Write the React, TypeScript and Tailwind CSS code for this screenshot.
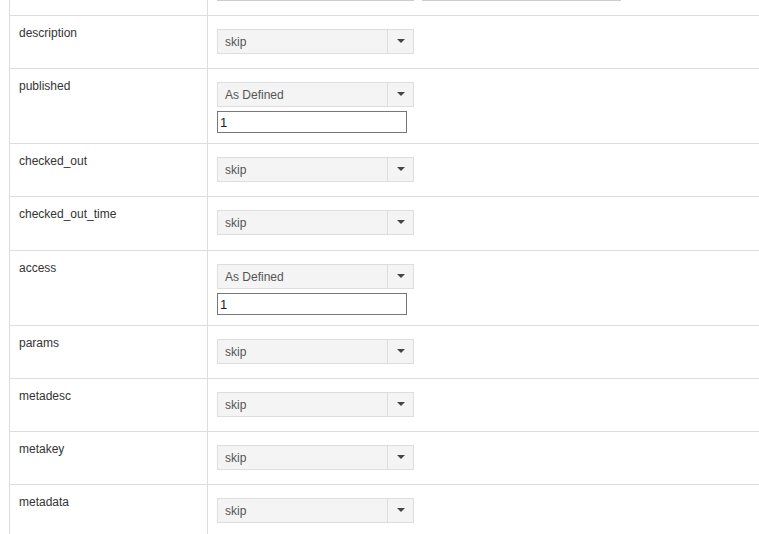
import React from 'react';

type Row = {
  name: string;
  value: string;
  extra?: string;
  height: string;
};

const rows: Row[] = [
  { name: 'description', value: 'skip', height: 'h-[53px]' },
  { name: 'published', value: 'As Defined', extra: '1', height: 'h-[75px]' },
  { name: 'checked_out', value: 'skip', height: 'h-[53px]' },
  { name: 'checked_out_time', value: 'skip', height: 'h-[54px]' },
  { name: 'access', value: 'As Defined', extra: '1', height: 'h-[75px]' },
  { name: 'params', value: 'skip', height: 'h-[53px]' },
  { name: 'metadesc', value: 'skip', height: 'h-[53px]' },
  { name: 'metakey', value: 'skip', height: 'h-[53px]' },
  { name: 'metadata', value: 'skip', height: 'h-[60px]' },
];

// fake "chosen" style dropdown
const Select: React.FC<{ value: string }> = ({ value }) => (
  <div className="flex h-[25px] w-[197px] border border-[#dddddd] bg-[#f4f4f4]">
    <div className="flex flex-1 items-center pl-[7px] text-[12px] text-[#555555]">{value}</div>
    <div className="flex w-[26px] items-center justify-center border-l border-[#dddddd]">
      <span className="mt-[-1px] h-0 w-0 border-x-[4px] border-t-[4px] border-x-transparent border-t-[#444444]" />
    </div>
  </div>
);

const App: React.FC = () => {
  return (
    <div className="h-[534px] w-[759px] overflow-hidden bg-white font-['Liberation_Sans',Arial,sans-serif] text-[12px] leading-[18px] text-[#333333]">
      <div className="ml-[9px] border-l border-[#dddddd]">
        {/* tail of the row above, cut off by the viewport */}
        <div className="flex h-[15px]">
          <div className="w-[198px] border-r border-[#dddddd]" />
          <div className="flex items-start gap-[8px] pl-[9px]">
            <div className="h-[1px] w-[197px] bg-[#cccccc]" />
            <div className="h-[1px] w-[199px] bg-[#cccccc]" />
          </div>
        </div>

        {rows.map((row) => (
          <div key={row.name} className={`flex border-t border-[#dddddd] ${row.height}`}>
            <div className="w-[198px] shrink-0 border-r border-[#dddddd] pl-[9px] pt-[8px]">
              {row.name}
            </div>
            <div className="flex flex-col pl-[9px] pt-[13px]">
              <Select value={row.value} />
              {row.extra && (
                <input
                  readOnly
                  value={row.extra}
                  className="mt-[4px] h-[22px] w-[190px] border border-[#777777] bg-white px-[2px] text-[13px] text-[#1a1a2e] outline-none"
                />
              )}
            </div>
          </div>
        ))}
      </div>
    </div>
  );
};

export default App;
